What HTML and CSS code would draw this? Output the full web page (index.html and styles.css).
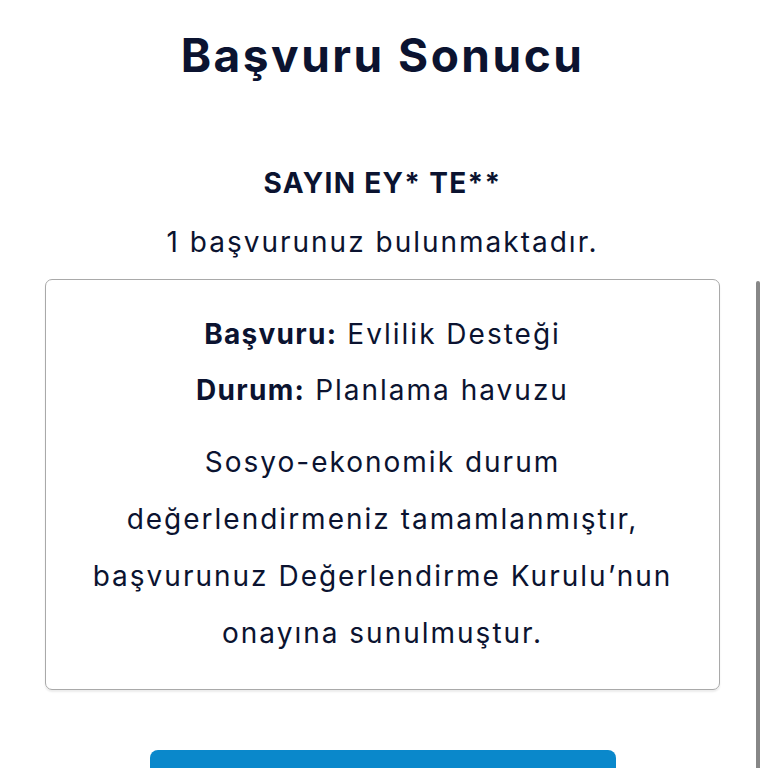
FILE: index.html
```html
<!DOCTYPE html>
<html lang="tr">

<head>
  <meta charset="UTF-8" />
  <meta name="viewport" content="width=device-width, initial-scale=1.0" />
  <title>Başvuru Sonucu</title>
  <link rel="stylesheet" href="styles.css">
</head>

<body>
  <main class="result">
    <h1>Başvuru Sonucu</h1>
    <p class="name">SAYIN EY* TE**</p>
    <p class="count">1 başvurunuz bulunmaktadır.</p>

    <section class="card">
      <p class="row"><strong>Başvuru:</strong> Evlilik Desteği</p>
      <p class="row"><strong>Durum:</strong> Planlama havuzu</p>
      <p class="desc">Sosyo-ekonomik durum değerlendirmeniz tamamlanmıştır, başvurunuz Değerlendirme Kurulu’nun onayına sunulmuştur.</p>
    </section>

    <button class="btn"></button>
  </main>
  <div class="scrollbar"></div>
</body>

</html>
```

FILE: styles.css
```css
:root {
  --dark: #0b1330;
  --border: #a9a9a9;
  --blue: #0a88cb;
  --white: #ffffff;
}

body {
  margin: 0;
  background: var(--white);
  color: var(--dark);
  font-family: "Inter", "Noto Sans", sans-serif;
  overflow: hidden;
  height: 768px;
}

.result {
  box-sizing: border-box;
  height: 768px;
  overflow: hidden;
  display: flex;
  flex-direction: column;
  align-items: center;
  padding: 25px 48px 0 45px;
}

h1 {
  margin: 0;
  font-size: 46px;
  font-weight: 700;
  line-height: 60px;
  letter-spacing: 2.5px;
}

.name {
  margin: 80px 0 0;
  font-size: 28px;
  font-weight: 700;
  line-height: 36px;
  letter-spacing: 1.3px;
}

.count {
  margin: 23px 0 0;
  font-size: 28px;
  line-height: 36px;
  letter-spacing: 2px;
}

.card {
  box-sizing: border-box;
  width: 675px;
  flex-shrink: 0;
  margin-top: 19px;
  padding: 34px 36px 27px;
  border: 1.5px solid var(--border);
  border-radius: 7px;
  box-shadow: 0 2px 2px rgba(0, 0, 0, 0.08);
  text-align: center;
}

.row {
  margin: 0 0 16px;
  font-size: 28px;
  line-height: 40px;
  letter-spacing: 2px;
}

.row strong {
  font-weight: 700;
  letter-spacing: 1.3px;
}

.desc {
  margin: 24px 0 0;
  font-size: 28px;
  line-height: 57px;
  letter-spacing: 2px;
}

.btn {
  flex-shrink: 0;
  width: 466px;
  height: 60px;
  margin-top: 60px;
  border: none;
  border-radius: 8px;
  background: var(--blue);
}

.scrollbar {
  position: absolute;
  top: 281px;
  right: 8px;
  width: 4px;
  height: 487px;
  border-radius: 2px 2px 0 0;
  background: #878787;
}
```
